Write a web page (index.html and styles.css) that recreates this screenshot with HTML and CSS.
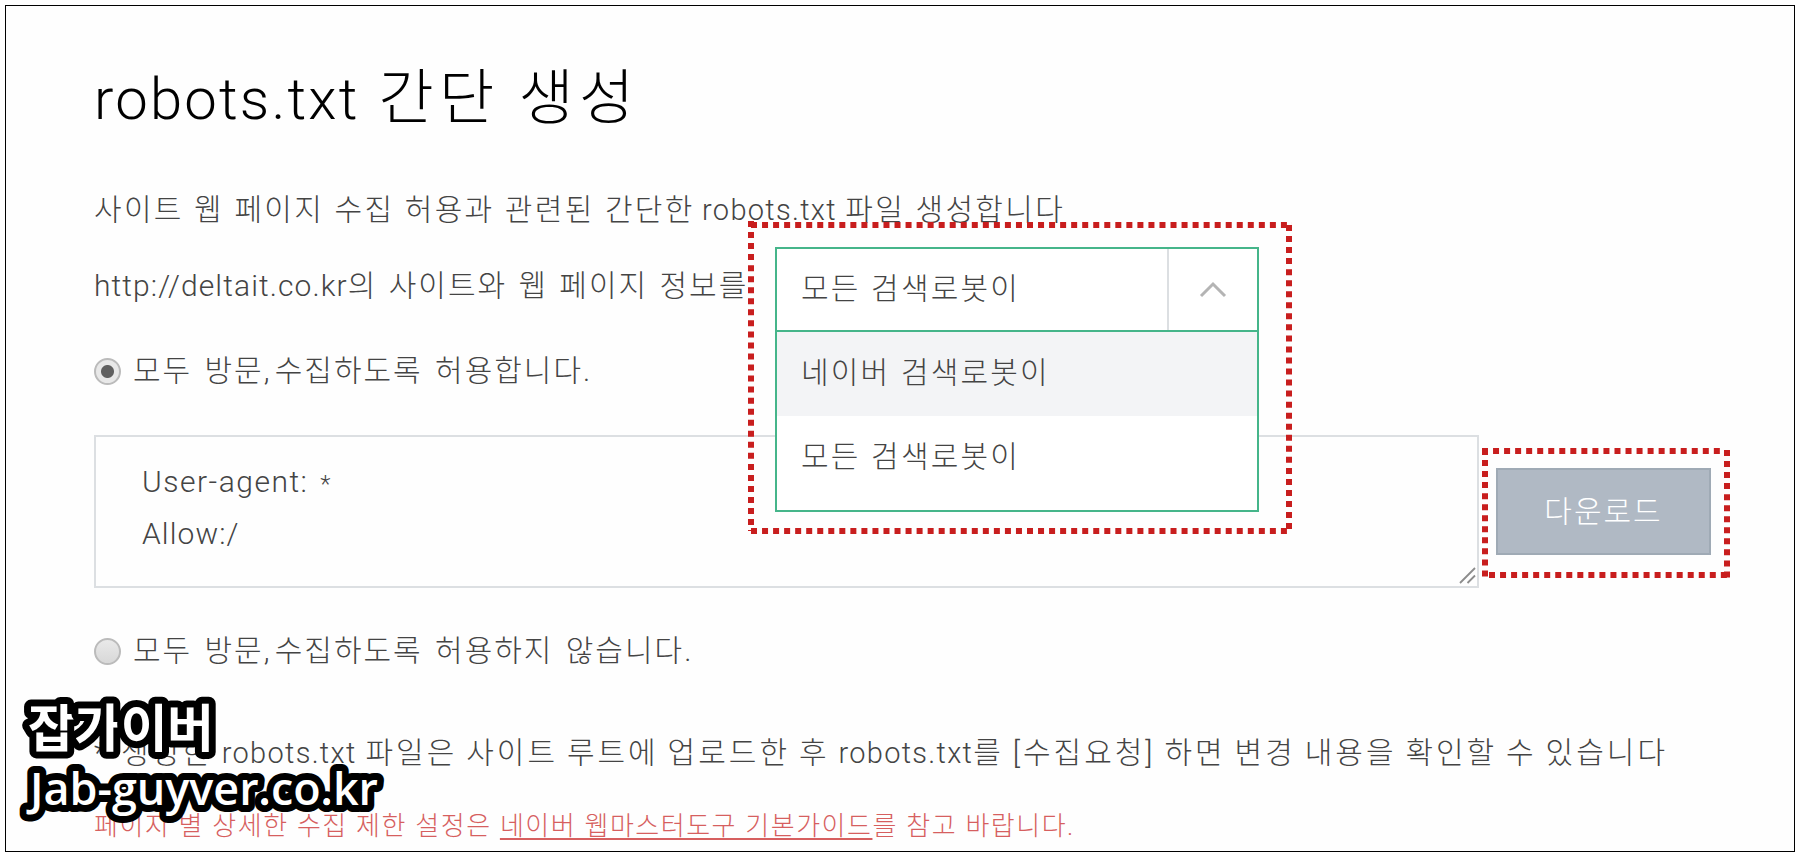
FILE: index.html
```
<!DOCTYPE html>
<html lang="ko">
<head>
  <meta charset="UTF-8">
  <title>robots.txt 간단 생성</title>
  <link rel="stylesheet" href="styles.css">
</head>
<body>
  <div class="page">
    <h1 class="title"><span class="en">robots.txt</span> 간단 생성</h1>
    <p class="desc">사이트 웹 페이지 수집 허용과 관련된 간단한 <span class="en">robots.txt</span> 파일 생성합니다</p>

    <div class="target">
      <p class="site"><span class="url">http://deltait.co.kr</span>의 사이트와 웹 페이지 정보를</p>
      <div class="select">
        <div class="select-value">
          <span>모든 검색로봇이</span>
          <span class="select-arrow">
            <svg width="28" height="18" viewBox="0 0 28 18"><path d="M2 15 L14 3 L26 15" fill="none" stroke="#b4b4b4" stroke-width="3"/></svg>
          </span>
        </div>
        <ul class="select-list">
          <li class="on">네이버 검색로봇이</li>
          <li>모든 검색로봇이</li>
        </ul>
        <svg class="mark mark-select" width="546" height="314" viewBox="0 0 546 314">
          <path d="M4 0V310M542 4V313M4 4H545M4 310H542"/>
        </svg>
      </div>
    </div>

    <label class="option"><span class="radio checked"></span>모두 방문<span class="comma">,</span>수집하도록 허용합니다.</label>

    <div class="result">
      <div class="code">
        <div>User-agent: <span class="any">*</span></div>
        <div class="allow">Allow:/</div>
        <svg class="grip" width="17" height="17" viewBox="0 0 17 17"><path d="M1 16 L16 1 M8.500 16 L16 8.500" stroke="#8c8c8c" stroke-width="1.800"/></svg>
      </div>
      <div class="download">
        <button type="button">다운로드</button>
        <svg class="mark mark-download" width="250" height="132" viewBox="0 0 250 132">
          <path d="M4 2V131M246 3V131M1 4H243M8 128H249"/>
        </svg>
      </div>
    </div>

    <label class="option second"><span class="radio"></span>모두 방문<span class="comma">,</span>수집하도록 허용하지 않습니다.</label>

    <p class="note"><span class="star">*</span>생성한 <span class="en">robots.txt</span> 파일은 사이트 루트에 업로드한 후 <span class="en">robots.txt</span>를 [수집요청] 하면 변경 내용을 확인할 수 있습니다</p>
    <p class="guide">페이지 별 상세한 수집 제한 설정은 <a>네이버 웹마스터도구 기본가이드</a>를 참고 바랍니다.</p>

    <svg class="watermark" width="400" height="140" viewBox="0 0 400 140">
      <text class="wm-ko" x="19" y="58" textLength="186">잡가이버</text>
      <text class="wm-en" x="21" y="116" textLength="348" lengthAdjust="spacingAndGlyphs">Jab-guyver.co.kr</text>
    </svg>
  </div>
</body>
</html>
```
FILE: styles.css
```
* {
  box-sizing: border-box;
}
body {
  margin: 0;
  padding: 5px;
  background: #fff;
  color: #444;
  font-family: Roboto, "Noto Sans CJK KR", sans-serif;
  font-weight: 300;
  font-size: 30px;
  line-height: 40px;
  letter-spacing: 2px;
  word-spacing: 3px;
  white-space: nowrap;
}
h1, p, ul {
  margin: 0;
  padding: 0;
  font-weight: 300;
}
.page {
  position: relative;
  height: 847px;
  width: 1790px;
  padding: 63px 0 0 88px;
  border: 1px solid #000;
  background: #fefefe;
  overflow: hidden;
}
.title {
  color: #000;
  font-size: 60px;
  line-height: 60px;
  letter-spacing: 5.3px;
  word-spacing: -1px;
}
.desc {
  margin-top: 61px;
  letter-spacing: 2.3px;
  word-spacing: 0.8px;
}
.en {
  font-size: 29px;
  letter-spacing: 1.3px;
}
.desc .en {
  margin: 0 -2px 0 -3px;
}
.title .en {
  font-size: 58px;
  letter-spacing: 2.2px;
}
.target {
  display: flex;
  margin-top: 17px;
}
.site {
  width: 681px;
  line-height: 78px;
  word-spacing: 2px;
}
.url {
  letter-spacing: 1.1px;
}

/* dropdown */
.select {
  position: relative;
  width: 484px;
  height: 84px;
  letter-spacing: 2.2px;
  word-spacing: 1px;
}
.select-value {
  display: flex;
  justify-content: space-between;
  height: 85px;
  padding-left: 24px;
  border: 2px solid #45b58a;
  background: #fff;
  line-height: 80px;
}
.select-arrow {
  display: flex;
  align-items: center;
  justify-content: center;
  width: 90px;
  border-left: 2px solid #dcdfe2;
}
.select-list {
  position: absolute;
  top: 83px;
  left: 0;
  z-index: 2;
  width: 484px;
  height: 182px;
  border: 2px solid #45b58a;
  background: #fff;
  list-style: none;
}
.select-list li {
  height: 84px;
  padding-left: 24px;
  line-height: 82px;
}
.select-list .on {
  background: #f3f4f6;
}

/* red dotted highlights */
.mark {
  position: absolute;
  z-index: 3;
  fill: none;
  stroke: #c81e1e;
  stroke-width: 6;
  stroke-dasharray: 6 5.04;
}
.mark-select {
  top: -26px;
  left: -28px;
}
.mark-download {
  top: -21px;
  left: -15px;
}

.option {
  display: flex;
  align-items: center;
  margin-top: 20px;
}
.option.second {
  margin-top: 43px;
}
.comma {
  width: 11px;
}
.radio {
  width: 27px;
  height: 27px;
  margin-right: 12px;
  border: 2px solid #bbb;
  border-radius: 50%;
  background: linear-gradient(#e9e9e9, #d8d8d8);
}
.radio.checked {
  background: radial-gradient(circle, #606060 0 6px, #e8e8e8 7px);
}

.result {
  display: flex;
  align-items: flex-start;
  gap: 18px;
  margin-top: 44px;
}
.code {
  position: relative;
  width: 1385px;
  height: 153px;
  padding: 19px 46px;
  border: 2px solid #dcdfe2;
  line-height: 52px;
  letter-spacing: 1.5px;
}
.any {
  font-size: 24px;
  line-height: 1;
}
.allow {
  letter-spacing: 1.1px;
}
.grip {
  position: absolute;
  right: 1px;
  bottom: 2px;
}
.download {
  position: relative;
  margin: 33px 0 0 -1px;
}
.download button {
  display: block;
  width: 215px;
  height: 87px;
  padding: 0;
  border: 2px solid #9faab5;
  background: #b0b9c4;
  color: #fff;
  font: inherit;
  letter-spacing: 2px;
}

.note {
  margin-top: 62px;
  letter-spacing: 3px;
  word-spacing: -1.4px;
}
.star {
  display: inline-block;
  width: 27px;
}
.guide {
  margin-top: 33px;
  color: #d65f5f;
  font-size: 26px;
  letter-spacing: 1.5px;
  word-spacing: 0.5px;
}
.guide a {
  text-decoration: underline;
  text-decoration-thickness: 2px;
  text-underline-offset: 3px;
}

.watermark {
  position: absolute;
  top: 683px;
  left: 3px;
  fill: #fff;
  stroke: #000;
  stroke-width: 14px;
  stroke-linejoin: round;
  paint-order: stroke;
  font-family: "Open Sans", "Noto Sans CJK KR", sans-serif;
  letter-spacing: 0;
  word-spacing: 0;
}
.wm-ko {
  font-size: 51px;
  font-weight: 700;
}
.wm-en {
  font-size: 46px;
  font-weight: 600;
}
```
